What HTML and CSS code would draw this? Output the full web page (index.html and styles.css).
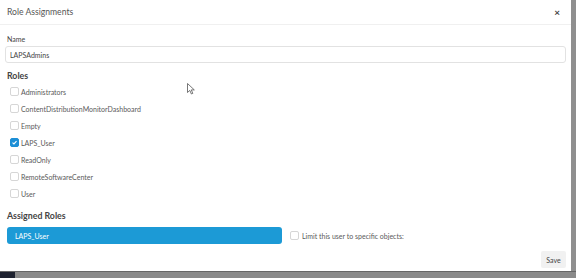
FILE: index.html
```html
<!DOCTYPE html>
<html>
<head>
<meta charset="utf-8">
<link rel="stylesheet" href="styles.css">
</head>
<body>
<div class="modal">
  <div class="header">
    <div class="title">Role Assignments</div>
    <div class="close">×</div>
  </div>
  <div class="body">
    <div class="label">Name</div>
    <div class="input">LAPSAdmins</div>
    <div class="section">Roles</div>
    <div class="roles">
      <div class="row"><span class="cb"></span><span>Administrators</span></div>
      <div class="row"><span class="cb"></span><span>ContentDistributionMonitorDashboard</span></div>
      <div class="row"><span class="cb"></span><span>Empty</span></div>
      <div class="row"><span class="cb checked"><svg viewBox="0 0 10 10" width="9" height="9"><path d="M2.2 5.2 L4.2 7.1 L7.9 3" fill="none" stroke="#fff" stroke-width="1.5"/></svg></span><span>LAPS_User</span></div>
      <div class="row"><span class="cb"></span><span>ReadOnly</span></div>
      <div class="row"><span class="cb"></span><span>RemoteSoftwareCenter</span></div>
      <div class="row"><span class="cb"></span><span>User</span></div>
    </div>
    <div class="section assigned">Assigned Roles</div>
    <div class="assigned-row">
      <div class="pill">LAPS_User</div>
      <div class="row limit"><span class="cb"></span><span>Limit this user to specific objects:</span></div>
    </div>
    <div class="footer"><button class="save">Save</button></div>
  </div>
  <svg class="cursor" viewBox="0 0 8 12" width="8" height="12"><path d="M0.5 0.5 L0.5 9.5 L2.8 7.4 L4.4 11 L5.8 10.4 L4.3 6.9 L7.3 6.9 Z" fill="#fff" stroke="#555" stroke-width="0.8"/></svg>
</div>
<div class="taskbar"><span class="dark"></span></div>
</body>
</html>
```
FILE: styles.css
```css
html, body { margin: 0; padding: 0; }
body {
  width: 576px;
  height: 278px;
  background: #8f8f8f;
  font-family: Lato, "Open Sans", sans-serif;
  color: #555;
  overflow: hidden;
  position: relative;
}
.modal {
  position: relative;
  width: 571px;
  height: 271px;
  background: #fff;
  box-sizing: border-box;
}
.header {
  height: 25px;
  border-bottom: 1px solid #f0f0f0;
  display: flex;
  align-items: center;
  justify-content: space-between;
  padding: 0 11px 0 7px;
  box-sizing: border-box;
}
.title { font-size: 8.6px; color: #555; }
.close { font-size: 10px; font-weight: bold; color: #444; line-height: 1; }
.body { padding: 9px 5px 0 5px; }
.label { font-size: 7px; color: #444; margin-left: 2px; line-height: 10px; }
.input {
  margin-top: 2px;
  height: 17px;
  border: 1px solid #e2e2e2;
  border-radius: 3px;
  box-sizing: border-box;
  font-size: 7px;
  color: #444;
  padding-left: 4px;
  display: flex;
  align-items: center;
}
.section {
  font-size: 8.8px;
  font-weight: 700;
  color: #444;
  margin: 6px 0 0 2px;
  line-height: 13px;
}
.roles { display: flex; flex-direction: column; margin-top: 1px; }
.row {
  display: flex;
  align-items: center;
  height: 17px;
  font-size: 7px;
  color: #5a5a5a;
  padding-left: 5px;
  gap: 2px;
}
.cb {
  width: 9px;
  height: 9px;
  border: 1px solid #d6d6d6;
  border-radius: 2px;
  background: #fff;
  box-sizing: border-box;
  display: flex;
  align-items: center;
  justify-content: center;
  flex: none;
}
.cb.checked { background: #1d8fd6; border-color: #1d8fd6; }
.section.assigned { margin-top: 7px; }
.assigned-row {
  display: flex;
  align-items: center;
  margin-top: 5px;
  gap: 4px;
}
.pill {
  width: 275px;
  height: 17px;
  margin-left: 2px;
  background: #1c9ad6;
  border-radius: 3px;
  color: #fff;
  font-size: 7px;
  display: flex;
  align-items: center;
  padding-left: 8px;
  box-sizing: border-box;
}
.limit { padding-left: 4px; gap: 3px; }
.footer { display: flex; justify-content: flex-end; margin-top: 7px; }
.save {
  font-family: inherit;
  font-size: 7px;
  color: #444;
  background: #f1f1f1;
  border: none;
  border-radius: 2px;
  width: 25px;
  height: 17px;
  padding: 0;
}
.cursor { position: absolute; left: 187px; top: 83px; }
.taskbar {
  position: absolute;
  left: 0;
  top: 271px;
  width: 576px;
  height: 7px;
  background: #8a8a8a;
  border-top: 1px solid #666;
  box-sizing: border-box;
}
.taskbar .dark { display: block; width: 15px; height: 6px; background: #1e2230; }
```
